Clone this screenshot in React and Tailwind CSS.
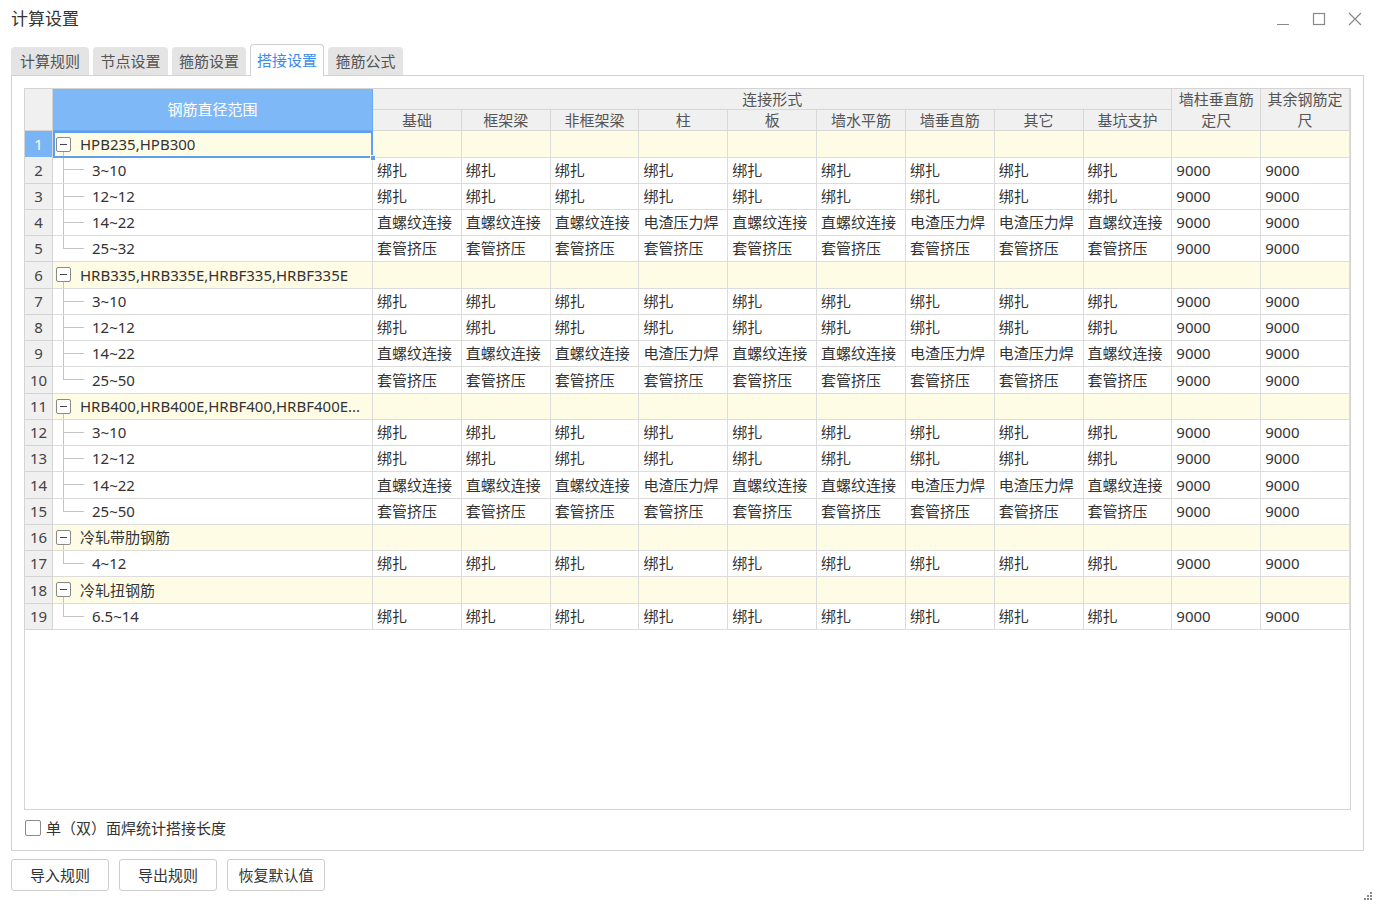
import { useState } from 'react';

const cols = ['基础', '框架梁', '非框架梁', '柱', '板', '墙水平筋', '墙垂直筋', '其它', '基坑支护'];

const bind = Array(9).fill('绑扎');
const thread = ['直螺纹连接', '直螺纹连接', '直螺纹连接', '电渣压力焊', '直螺纹连接', '直螺纹连接', '电渣压力焊', '电渣压力焊', '直螺纹连接'];
const sleeve = Array(9).fill('套管挤压');

const groups = [
    {
        name: 'HPB235,HPB300',
        items: [['3~10', bind], ['12~12', bind], ['14~22', thread], ['25~32', sleeve]],
    },
    {
        name: 'HRB335,HRB335E,HRBF335,HRBF335E',
        items: [['3~10', bind], ['12~12', bind], ['14~22', thread], ['25~50', sleeve]],
    },
    {
        name: 'HRB400,HRB400E,HRBF400,HRBF400E...',
        items: [['3~10', bind], ['12~12', bind], ['14~22', thread], ['25~50', sleeve]],
    },
    { name: '冷轧带肋钢筋', items: [['4~12', bind]] },
    { name: '冷轧扭钢筋', items: [['6.5~14', bind]] },
];

const rowGrid = 'grid grid-cols-[28px_320px_repeat(11,minmax(0,1fr))] h-[26.25px]';
const cell = 'border-r border-b border-[#dcdcdc] flex items-center pl-[4px] whitespace-nowrap overflow-hidden';

const tabs = [
    ['计算规则', 'w-[78px]'],
    ['节点设置', 'w-[75px]'],
    ['箍筋设置', 'w-[74px]'],
    ['搭接设置', 'w-[74px]'],
    ['箍筋公式', 'w-[75px]'],
];

const GroupRow = ({ n, name, selected }) => (
    <div className={`${rowGrid} bg-[#fffce6]`}>
        <div
            className={`border-r border-b border-[#d4d4d4] flex items-center justify-center ${
                selected ? 'bg-[#79b4f5] text-white' : 'bg-[#f0f0f0] text-[#444]'
            }`}
        >
            {n}
        </div>
        <div
            className={`relative flex items-stretch ${
                selected ? 'border-2 border-[#5f9ff0]' : 'border-r border-b border-[#dcdcdc]'
            }`}
        >
            <div className={`w-[15px] flex flex-col ${selected ? 'ml-[1px]' : 'ml-[3px]'}`}>
                <div className="flex-1" />
                <div className="h-[15px] border border-[#8a8a8a] rounded-[2px] bg-white flex items-center justify-center">
                    <div className="w-[7px] h-px bg-[#444]" />
                </div>
                <div className="flex-1 ml-[7px] border-l border-[#c4c4c4]" />
            </div>
            <span className="ml-[9px] self-center text-[#333] whitespace-nowrap overflow-hidden">{name}</span>
            {selected && (
                <div className="absolute right-[-5px] bottom-[-5px] w-[6px] h-[6px] bg-[#5f9ff0] border border-white" />
            )}
        </div>
        {Array.from({ length: 11 }).map((_, i) => (
            <div key={i} className={cell} />
        ))}
    </div>
);

const ChildRow = ({ n, label, values, last }) => (
    <div className={`${rowGrid} bg-white`}>
        <div className="border-r border-b border-[#d4d4d4] bg-[#f0f0f0] text-[#444] flex items-center justify-center">
            {n}
        </div>
        <div className="border-r border-b border-[#dcdcdc] flex items-stretch">
            <div className="ml-[10px] w-[21px] flex flex-col">
                <div className="flex-1 border-l border-b border-[#c4c4c4]" />
                <div className={`flex-1 ${last ? '' : 'border-l border-[#c4c4c4]'}`} />
            </div>
            <span className="ml-[8px] self-center text-[#333]">{label}</span>
        </div>
        {values.map((v, i) => (
            <div key={i} className={`${cell} text-[#333]`}>
                {v}
            </div>
        ))}
        <div className={`${cell} text-[#333]`}>9000</div>
        <div className={`${cell} text-[#333]`}>9000</div>
    </div>
);

export default function App() {
    const [checked, setChecked] = useState(false);
    let n = 0;
    const rows = [];
    groups.forEach((g, gi) => {
        n += 1;
        rows.push(<GroupRow key={`g${gi}`} n={n} name={g.name} selected={gi === 0} />);
        g.items.forEach((it, ii) => {
            n += 1;
            rows.push(
                <ChildRow key={`c${gi}-${ii}`} n={n} label={it[0]} values={it[1]} last={ii === g.items.length - 1} />
            );
        });
    });

    return (
        <div
            className="w-[1376px] h-[902px] bg-white relative text-[15px] text-[#333] overflow-hidden"
            style={{ fontFamily: '"Noto Sans", "Noto Sans CJK SC", sans-serif' }}
        >
            {/* title bar */}
            <div className="h-[37px] flex items-center justify-between pl-[11px] pr-[14px]">
                <span className="text-[17px] text-[#333] mt-[1px]">计算设置</span>
                <div className="flex items-center gap-[22px] text-[#777]">
                    <svg width="14" height="14" viewBox="0 0 14 14">
                        <line x1="1" y1="12.5" x2="13" y2="12.5" stroke="#888" strokeWidth="1" />
                    </svg>
                    <svg width="14" height="14" viewBox="0 0 14 14">
                        <rect x="1.5" y="1.5" width="11" height="11" fill="none" stroke="#888" strokeWidth="1.2" />
                    </svg>
                    <svg width="14" height="14" viewBox="0 0 14 14">
                        <path d="M1 1 L13 13 M13 1 L1 13" stroke="#888" strokeWidth="1.2" />
                    </svg>
                </div>
            </div>

            {/* tabs */}
            <div className="flex items-end gap-[4px] pl-[11px] h-[38px]">
                {tabs.map(([t, w], i) =>
                    i === 3 ? (
                        <div
                            key={t}
                            className={`${w} h-[32px] bg-white border border-b-0 border-[#cfcfcf] rounded-t-[4px] text-[#3b8beb] flex items-center justify-center relative z-10 -mb-px`}
                        >
                            {t}
                        </div>
                    ) : (
                        <div
                            key={t}
                            className={`${w} h-[28px] bg-[#e4e4e4] rounded-t-[4px] text-[#555] flex items-center justify-center`}
                        >
                            {t}
                        </div>
                    )
                )}
            </div>

            {/* panel */}
            <div className="mx-[11px] w-[1353px] h-[776px] border border-[#d2d2d2] flex flex-col pt-[12px] pl-[12px]">
                <div className="w-[1327px] h-[722px] border border-[#d4d4d4] bg-white">
                    {/* header */}
                    <div className="grid grid-cols-[28px_320px_repeat(11,minmax(0,1fr))] grid-rows-[21px_21px] text-[#555] bg-[#f0f0f0]">
                        <div className="row-span-2 border-r border-b border-[#d4d4d4]" />
                        <div className="row-span-2 bg-[#7fb8f7] text-white flex items-center justify-center border-r border-b border-[#6aa8f0]">
                            钢筋直径范围
                        </div>
                        <div className="col-span-9 border-r border-b border-[#d8d8d8] flex items-center justify-center">
                            连接形式
                        </div>
                        <div className="row-span-2 border-r border-b border-[#d8d8d8] flex flex-col items-center justify-center leading-[21px]">
                            <span>墙柱垂直筋</span>
                            <span>定尺</span>
                        </div>
                        <div className="row-span-2 border-r border-b border-[#d8d8d8] flex flex-col items-center justify-center leading-[21px]">
                            <span>其余钢筋定</span>
                            <span>尺</span>
                        </div>
                        {cols.map((c) => (
                            <div key={c} className="border-r border-b border-[#d8d8d8] flex items-center justify-center">
                                {c}
                            </div>
                        ))}
                    </div>
                    {rows}
                </div>

                <label className="flex items-center mt-[9px] h-[18px] ml-[1px] cursor-pointer select-none">
                    <input
                        type="checkbox"
                        checked={checked}
                        onChange={(e) => setChecked(e.target.checked)}
                        className="appearance-none w-[16px] h-[16px] border border-[#8a8a8a] rounded-[2px] bg-white checked:bg-[#3b8beb]"
                    />
                    <span className="ml-[5px] text-[#333]">单（双）面焊统计搭接长度</span>
                </label>
            </div>

            {/* footer buttons */}
            <div className="flex gap-[10px] pl-[11px] mt-[8px]">
                {['导入规则', '导出规则', '恢复默认值'].map((b) => (
                    <button
                        key={b}
                        className="w-[98px] h-[32px] border border-[#cdcdcd] rounded-[3px] bg-white text-[#333] flex items-center justify-center"
                    >
                        {b}
                    </button>
                ))}
            </div>

            {/* resize grip */}
            <div className="absolute right-[4px] bottom-[2px] grid grid-cols-3 gap-[1px]">
                <span className="w-[2px] h-[2px]" />
                <span className="w-[2px] h-[2px]" />
                <span className="w-[2px] h-[2px] bg-[#888]" />
                <span className="w-[2px] h-[2px]" />
                <span className="w-[2px] h-[2px] bg-[#888]" />
                <span className="w-[2px] h-[2px] bg-[#888]" />
                <span className="w-[2px] h-[2px] bg-[#888]" />
                <span className="w-[2px] h-[2px] bg-[#888]" />
                <span className="w-[2px] h-[2px] bg-[#888]" />
            </div>
        </div>
    );
}
